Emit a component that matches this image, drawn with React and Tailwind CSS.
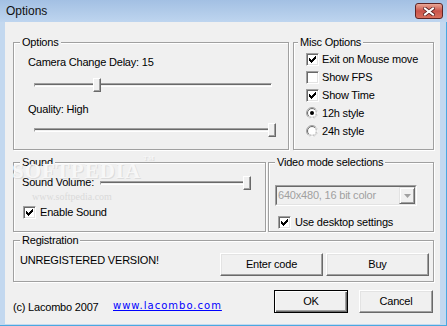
import React from 'react';

const CHECK = ['......#', '.....##', '#...###', '##.###.', '#####..', '.###...', '..#....'];

const CheckBox = ({ checked }) => (
  <span className="w-[13px] h-[13px] shrink-0 bg-white border border-t-[#a0a0a0] border-l-[#a0a0a0] border-r-white border-b-white shadow-[inset_1px_1px_0_#696969,inset_-1px_-1px_0_#e3e3e3] flex items-center justify-center">
    {checked && (
      <svg width="7" height="7" viewBox="0 0 7 7" shapeRendering="crispEdges">
        {CHECK.map((row, y) =>
          row.split('').map((c, x) => (c === '#' ? <rect key={`${x}-${y}`} x={x} y={y} width="1" height="1" fill="#000" /> : null))
        )}
      </svg>
    )}
  </span>
);

const Radio = ({ checked }) => (
  <svg width="12" height="12" viewBox="0 0 12 12" className="shrink-0">
    <circle cx="6" cy="6" r="5.5" fill="#fff" stroke="#a0a0a0" />
    <path d="M9.89 2.11 A5.5 5.5 0 0 1 2.11 9.89" fill="none" stroke="#fff" />
    <circle cx="6" cy="6" r="4.5" fill="none" stroke="#696969" />
    <path d="M9.18 2.82 A4.5 4.5 0 0 1 2.82 9.18" fill="none" stroke="#e3e3e3" />
    {checked && <circle cx="6" cy="6" r="2" fill="#000" />}
  </svg>
);

const Slider = ({ value, min, max, span, className, trackClass }) => {
  const left = ((value - min) / (max - min)) * span;
  return (
    <div className={`relative h-[14px] shrink-0 ${className}`}>
      <div className={`mt-[5px] h-[4px] border border-t-[#a0a0a0] border-l-[#a0a0a0] border-r-white border-b-white bg-[#f0f0f0] shadow-[inset_0_1px_0_#696969] ${trackClass}`} />
      <div
        className="absolute top-0 w-[8px] h-[14px] bg-[#f0f0f0] border border-t-white border-l-white border-r-[#696969] border-b-[#696969] shadow-[inset_-1px_-1px_0_#a0a0a0]"
        style={{ left }}
      />
    </div>
  );
};

const Button = ({ children, className = '', isDefault }) => (
  <button
    className={
      isDefault
        ? `h-[23px] bg-[#f0f0f0] border border-black shadow-[inset_1px_1px_0_#fff,inset_-1px_-1px_0_#696969,inset_-2px_-2px_0_#a0a0a0] flex items-center justify-center leading-[13px] ${className}`
        : `h-[23px] bg-[#f0f0f0] border border-t-white border-l-white border-r-[#696969] border-b-[#696969] shadow-[inset_-1px_-1px_0_#a0a0a0,inset_1px_1px_0_#e3e3e3] flex items-center justify-center leading-[13px] ${className}`
    }
  >
    {children}
  </button>
);

const Group = ({ title, className, legendClass, children }) => (
  <fieldset className={`min-w-0 shrink-0 border border-[#a0a0a0] shadow-[1px_1px_0_#fff,inset_1px_1px_0_#fff] ${className}`}>
    <legend className={`px-[2px] leading-[12px] bg-[#f0f0f0] ${legendClass}`}>{title}</legend>
    {children}
  </fieldset>
);

export default function App() {
  return (
    <div className="w-[447px] h-[326px] bg-[#c3d8ef] flex flex-col overflow-hidden shadow-[inset_0_-1px_0_#4aa8e0,inset_-1px_0_0_#4aa8e0] font-['Liberation_Sans',Arial,sans-serif] text-[11px] text-black tracking-[-0.2px]">
      {/* title bar */}
      <div className="h-[22px] shrink-0 bg-gradient-to-b from-[#a3c0e3] to-[#bed5ef] flex items-center justify-between pl-[6px] pr-[4px]">
        <span className="text-[12px] tracking-normal leading-none text-[#111]">Options</span>
        <div className="w-[28px] h-[16px] rounded-[3px] border border-[#5e2424] bg-gradient-to-b from-[#e9a797] via-[#c9534a] to-[#d9705e] flex items-center justify-center">
          <svg width="12" height="9" viewBox="0 0 12 9">
            <path d="M2 1.5 L10 7.5 M10 1.5 L2 7.5" stroke="#5a2020" strokeWidth="3.6" strokeLinecap="square" />
            <path d="M2 1.5 L10 7.5 M10 1.5 L2 7.5" stroke="#fff" strokeWidth="2" strokeLinecap="square" />
          </svg>
        </div>
      </div>

      {/* client area */}
      <div className="relative flex-1 ml-[5px] mr-[7px] mb-[2px] bg-[#f0f0f0] pl-[8px] pr-[6px] pt-[14px] flex flex-col">
        {/* watermark */}
        <div className="absolute left-[7px] top-[139px] font-['Liberation_Serif',serif] text-[21px] font-bold tracking-[1px] text-[#f7f7f7] [text-shadow:1px_1px_0_#dcdcdc] leading-none pointer-events-none">
          SOFTPEDIA<sup className="text-[6px] align-top ml-[2px]">TM</sup>
        </div>
        <div className="absolute left-[27px] top-[170px] font-['Liberation_Serif',serif] text-[10px] tracking-normal text-[#dadada] leading-none pointer-events-none">
          www.softpedia.com
        </div>

        {/* row 1 */}
        <div className="flex gap-[4px]">
          <Group title="Options" className="w-[276px] h-[114px]" legendClass="ml-[6px]">
            <div className="pl-[14px] pt-[8px] flex flex-col">
              <span className="leading-[13px]">Camera Change Delay: 15</span>
              <Slider value={15} min={0} max={60} span={234} className="mt-[9px] ml-[6px] w-[242px]" trackClass="w-[238px]" />
              <span className="mt-[11px] leading-[13px]">Quality: High</span>
              <Slider value={2} min={0} max={2} span={234} className="mt-[7px] ml-[6px] w-[242px]" trackClass="w-[238px]" />
            </div>
          </Group>

          <Group title="Misc Options" className="w-[141px] h-[114px]" legendClass="ml-[4px]">
            <div className="pl-[12px] pt-[2px] flex flex-col">
              <label className="h-[18px] flex items-center gap-[3px]">
                <CheckBox checked />
                <span className="leading-[13px]">Exit on Mouse move</span>
              </label>
              <label className="h-[18px] flex items-center gap-[3px]">
                <CheckBox />
                <span className="leading-[13px]">Show FPS</span>
              </label>
              <label className="h-[18px] flex items-center gap-[3px]">
                <CheckBox checked />
                <span className="leading-[13px]">Show Time</span>
              </label>
              <label className="h-[18px] flex items-center gap-[4px]">
                <Radio checked />
                <span className="leading-[13px]">12h style</span>
              </label>
              <label className="h-[18px] flex items-center gap-[4px]">
                <Radio />
                <span className="leading-[13px]">24h style</span>
              </label>
            </div>
          </Group>
        </div>

        {/* row 2 */}
        <div className="flex gap-[2px] mt-[6px]">
          <Group title="Sound" className="w-[253px] h-[76px]" legendClass="ml-[6px]">
            <div className="pl-[8px] pt-[7px] flex flex-col">
              <div className="h-[15px] flex items-center">
                <span className="w-[78px] shrink-0 leading-[13px]">Sound Volume:</span>
                <Slider value={100} min={0} max={100} span={143} className="w-[151px]" trackClass="w-[148px]" />
              </div>
              <label className="mt-[13px] h-[18px] flex items-center gap-[4px] ml-[1px]">
                <CheckBox checked />
                <span className="leading-[13px]">Enable Sound</span>
              </label>
            </div>
          </Group>

          <Group title="Video mode selections" className="w-[166px] h-[76px]" legendClass="ml-[6px]">
            <div className="pl-[6px] pt-[17px] flex flex-col">
              <div className="w-[142px] h-[21px] border border-t-[#a0a0a0] border-l-[#a0a0a0] border-r-white border-b-white">
                <div className="h-full border border-t-[#696969] border-l-[#696969] border-r-[#e3e3e3] border-b-[#e3e3e3] bg-[#f0f0f0] flex items-center">
                  <span className="flex-1 pl-[1px] leading-[13px] text-[#a0a0a0]">640x480, 16 bit color</span>
                  <span className="w-[16px] h-full bg-[#f0f0f0] border border-t-[#e3e3e3] border-l-[#e3e3e3] border-r-[#696969] border-b-[#696969] shadow-[inset_1px_1px_0_#fff,inset_-1px_-1px_0_#a0a0a0] flex items-center justify-center">
                    <svg width="7" height="4" viewBox="0 0 7 4">
                      <path d="M0 0 H7 L3.5 4 Z" fill="#a0a0a0" />
                    </svg>
                  </span>
                </div>
              </div>
              <label className="mt-[9px] h-[14px] flex items-center gap-[4px] ml-[3px]">
                <CheckBox checked />
                <span className="leading-[13px]">Use desktop settings</span>
              </label>
            </div>
          </Group>
        </div>

        {/* row 3 */}
        <Group title="Registration" className="mt-[2px] w-[421px] h-[48px]" legendClass="ml-[6px]">
          <div className="pl-[6px] pr-[4px] pt-[7px] flex items-start">
            <span className="mt-[1px] leading-[13px]">UNREGISTERED VERSION!</span>
            <div className="ml-auto flex gap-[3px]">
              <Button className="w-[103px]">Enter code</Button>
              <Button className="w-[103px]">Buy</Button>
            </div>
          </div>
        </Group>

        {/* bottom row */}
        <div className="mt-[8px] h-[23px] flex items-start">
          <span className="w-[100px] shrink-0 mt-[11px] leading-[13px]">(c) Lacombo 2007</span>
          <a className="mt-[9px] leading-[13px] font-['DejaVu_Sans',Verdana,sans-serif] text-[10px] tracking-[1px] text-[#0000ff] underline">
            www.lacombo.com
          </a>
          <div className="ml-auto mr-[1px] flex gap-[11px]">
            <Button className="w-[74px]" isDefault>OK</Button>
            <Button className="w-[74px]">Cancel</Button>
          </div>
        </div>
      </div>
    </div>
  );
}
